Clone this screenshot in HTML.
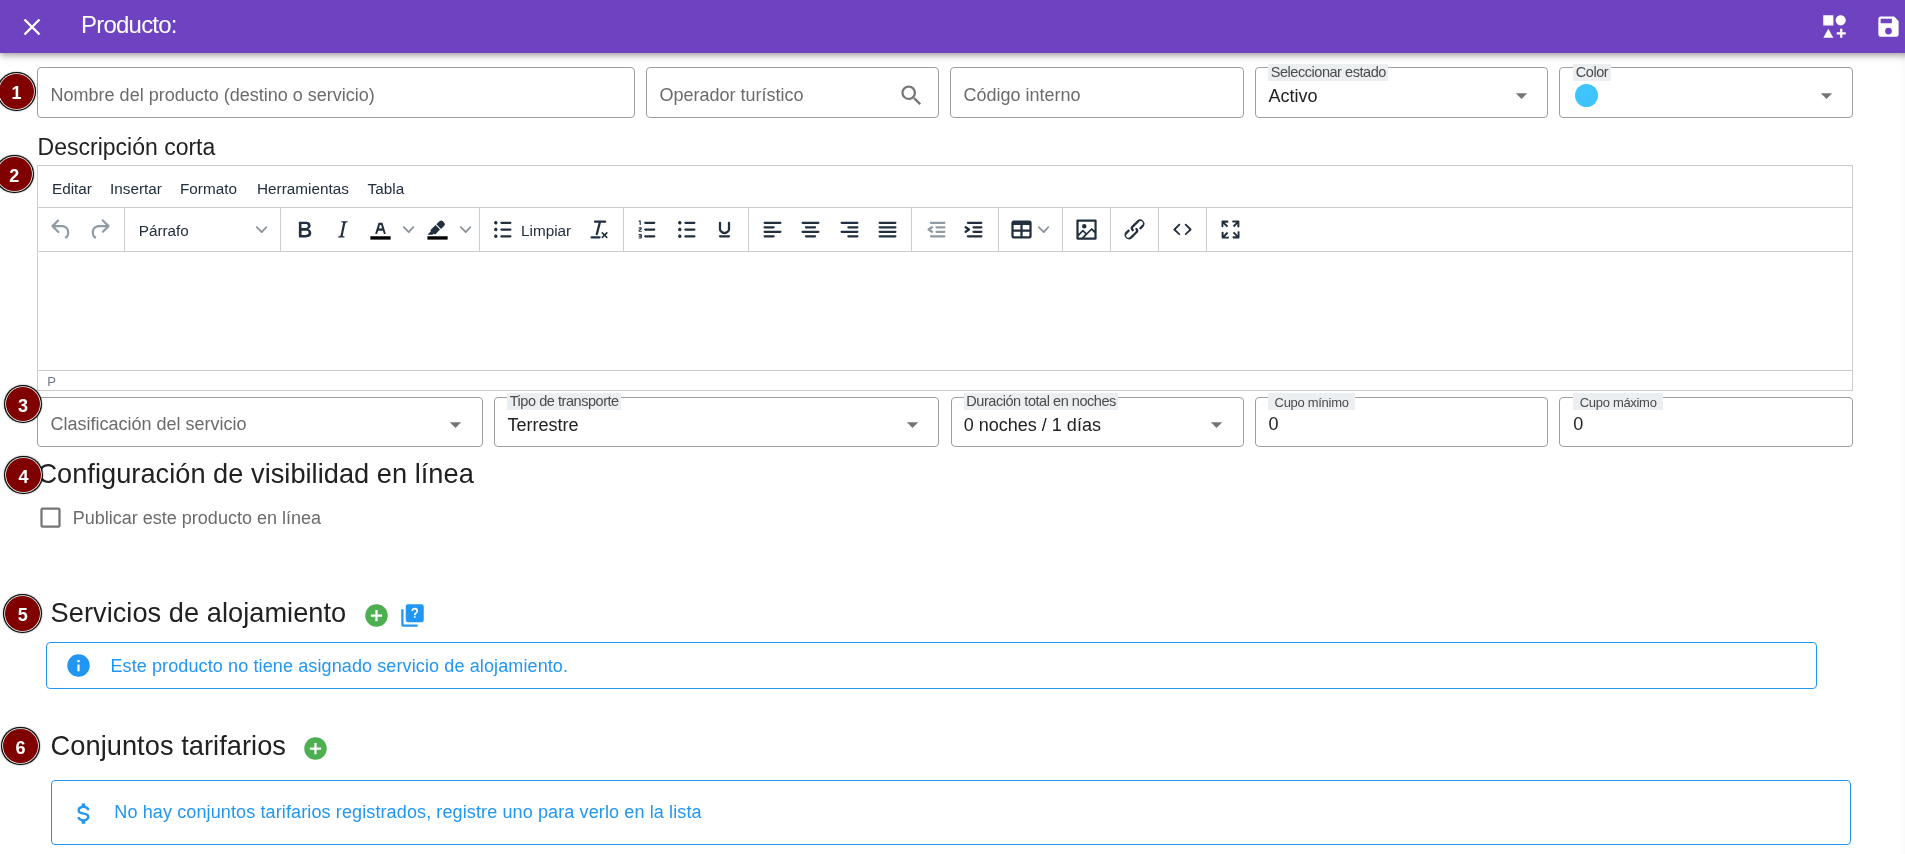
<!DOCTYPE html>
<html lang="es"><head><meta charset="utf-8"><title>Producto</title><style>
html,body{margin:0;padding:0;background:#fff;overflow:hidden;}
body{width:1905px;height:854px;overflow:hidden;position:relative;font-family:"Liberation Sans",sans-serif;}
.t{position:absolute;white-space:nowrap;line-height:1;}
.ic{position:absolute;display:block;overflow:visible;}
.box{position:absolute;box-sizing:border-box;border:1px solid #9e9e9e;background:transparent;}
.r{position:absolute;}
#wrap{position:absolute;left:0;top:0;width:1905px;height:854px;overflow:hidden;will-change:transform;}
#hdr{position:absolute;left:0;top:0;width:1935px;height:53px;background:#6f42c1;box-shadow:0 2.25px 4.5px -1.1px rgba(0,0,0,.2),0 4.5px 5.6px 0 rgba(0,0,0,.14),0 1.1px 11.25px 0 rgba(0,0,0,.12);}
.badge{position:absolute;box-sizing:border-box;width:34.8px;height:34.8px;border-radius:50%;background:#800000;box-shadow:0 0 0 .8px #fff,0 0 0 2px #0a0a0a,0 0 1.5px 2.3px rgba(0,0,0,.4);color:#fff;font-weight:bold;font-size:18px;line-height:38.6px;text-align:center;}
</style></head><body>
<div id="wrap">
<div id="hdr"></div>
<svg class="ic" style="left:19.5px;top:15px" width="24" height="24" viewBox="-12 -12 24 24"><path d="M-7.5-7.5L7.5 7.5M7.5-7.5L-7.5 7.5" stroke="#fff" stroke-width="2.45" fill="none"/></svg>
<div class="t" style="left:81.00px;top:12.98px;font-size:24px;color:#fff;letter-spacing:-0.78px;">Producto:</div>
<svg class="ic" style="left:1820.70px;top:13.10px" width="27" height="27" viewBox="0 0 24 24"><path fill="#fff" d="M2,2H11V11H2V2M17.5,2C20,2 22,4 22,6.5C22,9 20,11 17.5,11C15,11 13,9 13,6.5C13,4 15,2 17.5,2M6.5,14L11,22H2L6.5,14M19,17H22V19H19V22H17V19H14V17H17V14H19V17Z"/></svg>
<svg class="ic" style="left:1874.80px;top:13.30px" width="27" height="27" viewBox="0 0 24 24"><path fill="#fff" d="M15,9H5V5H15M12,19A3,3 0 0,1 9,16A3,3 0 0,1 12,13A3,3 0 0,1 15,16A3,3 0 0,1 12,19M17,3H5C3.89,3 3,3.9 3,5V19A2,2 0 0,0 5,21H19A2,2 0 0,0 21,19V7L17,3Z"/></svg>
<div class="box" style="left:37px;top:67px;width:598px;height:51px;border-color:#9e9e9e;border-radius:4px;"></div>
<div class="box" style="left:646px;top:67px;width:293px;height:51px;border-color:#9e9e9e;border-radius:4px;"></div>
<div class="box" style="left:950px;top:67px;width:294px;height:51px;border-color:#9e9e9e;border-radius:4px;"></div>
<div class="box" style="left:1255px;top:67px;width:293px;height:51px;border-color:#9e9e9e;border-radius:4px;"></div>
<div class="box" style="left:1559px;top:67px;width:294px;height:51px;border-color:#9e9e9e;border-radius:4px;"></div>
<div class="t" style="left:50.60px;top:86.46px;font-size:18px;color:#6b6b6b;">Nombre del producto (destino o servicio)</div>
<div class="t" style="left:659.50px;top:86.46px;font-size:18px;color:#6b6b6b;">Operador turístico</div>
<svg class="ic" style="left:898.40px;top:81.80px" width="27" height="27" viewBox="0 0 24 24"><path fill="#757575" d="M9.5,3A6.5,6.5 0 0,1 16,9.5C16,11.11 15.41,12.59 14.44,13.73L14.71,14H15.5L20.5,19L19,20.5L14,15.5V14.71L13.73,14.44C12.59,15.41 11.11,16 9.5,16A6.5,6.5 0 0,1 3,9.5A6.5,6.5 0 0,1 9.5,3M9.5,5C7,5 5,7 5,9.5C5,12 7,14 9.5,14C12,14 14,12 14,9.5C14,7 12,5 9.500,5Z"/></svg>
<div class="t" style="left:963.50px;top:86.46px;font-size:18px;color:#6b6b6b;">Código interno</div>
<div class="r" style="left:1268px;top:64px;width:120px;height:17px;background:#eceff1;"></div>
<div class="t" style="left:1270.70px;top:65.23px;font-size:14.5px;color:#4a4a4a;letter-spacing:-0.45px;">Seleccionar estado</div>
<div class="t" style="left:1268.60px;top:86.56px;font-size:18px;color:#212121;">Activo</div>
<svg class="ic" style="left:1508.30px;top:82.00px" width="27" height="27" viewBox="0 0 24 24"><path fill="#757575" d="M7,10L12,15L17,10H7Z"/></svg>
<div class="r" style="left:1573px;top:64px;width:38px;height:17px;background:#eceff1;"></div>
<div class="t" style="left:1575.80px;top:65.23px;font-size:14.5px;color:#4a4a4a;letter-spacing:-0.45px;">Color</div>
<div class="r" style="left:1575.0px;top:84.0px;width:23.2px;height:23.2px;border-radius:50%;background:#40c4ff"></div>
<svg class="ic" style="left:1812.60px;top:82.00px" width="27" height="27" viewBox="0 0 24 24"><path fill="#757575" d="M7,10L12,15L17,10H7Z"/></svg>
<div class="t" style="left:37.60px;top:135.53px;font-size:23px;color:#212121;">Descripción corta</div>
<div class="r" style="left:37px;top:165px;width:1816px;height:226px;border:1px solid #ccc;box-sizing:border-box"></div>
<div class="r" style="left:38px;top:207px;width:1814px;height:1px;background:#ccc;"></div>
<div class="r" style="left:38px;top:251px;width:1814px;height:1px;background:#ccc;"></div>
<div class="r" style="left:38px;top:370px;width:1814px;height:1px;background:#ccc;"></div>
<div class="t" style="left:52.00px;top:180.95px;font-size:15.3px;color:#222f3e;">Editar</div>
<div class="t" style="left:110.00px;top:180.95px;font-size:15.3px;color:#222f3e;">Insertar</div>
<div class="t" style="left:180.00px;top:180.95px;font-size:15.3px;color:#222f3e;">Formato</div>
<div class="t" style="left:257.00px;top:180.95px;font-size:15.3px;color:#222f3e;">Herramientas</div>
<div class="t" style="left:367.60px;top:180.95px;font-size:15.3px;color:#222f3e;">Tabla</div>
<div class="r" style="left:124px;top:208px;width:1px;height:43px;background:#ccc;"></div>
<div class="r" style="left:280px;top:208px;width:1px;height:43px;background:#ccc;"></div>
<div class="r" style="left:479px;top:208px;width:1px;height:43px;background:#ccc;"></div>
<div class="r" style="left:623px;top:208px;width:1px;height:43px;background:#ccc;"></div>
<div class="r" style="left:748px;top:208px;width:1px;height:43px;background:#ccc;"></div>
<div class="r" style="left:911px;top:208px;width:1px;height:43px;background:#ccc;"></div>
<div class="r" style="left:998px;top:208px;width:1px;height:43px;background:#ccc;"></div>
<div class="r" style="left:1062px;top:208px;width:1px;height:43px;background:#ccc;"></div>
<div class="r" style="left:1110px;top:208px;width:1px;height:43px;background:#ccc;"></div>
<div class="r" style="left:1158px;top:208px;width:1px;height:43px;background:#ccc;"></div>
<div class="r" style="left:1206px;top:208px;width:1px;height:43px;background:#ccc;"></div>
<svg class="ic" style="left:48.00px;top:215.80px" width="27" height="27" viewBox="0 0 24 24" fill="#909aa5"><path d="M6.4 8H12c3.7 0 6.2 2 6.8 5.1.6 2.7-.4 5.6-2.3 6.8a1 1 0 01-1-1.8c1.1-.6 1.8-2.7 1.4-4.6-.5-2.1-2.1-3.5-4.9-3.5H6.4l3.3 3.3a1 1 0 11-1.4 1.4l-5-5a1 1 0 010-1.4l5-5a1 1 0 011.4 1.4L6.4 8z" fill-rule="nonzero"/></svg>
<svg class="ic" style="left:86.00px;top:215.80px" width="27" height="27" viewBox="0 0 24 24" fill="#909aa5"><path d="M17.6 10H12c-2.8 0-4.4 1.4-4.9 3.5-.4 2 .3 4 1.4 4.6a1 1 0 11-1 1.8c-2-1.2-2.9-4.1-2.3-6.8.6-3 3-5.1 6.8-5.1h5.6l-3.3-3.3a1 1 0 111.4-1.4l5 5a1 1 0 010 1.4l-5 5a1 1 0 01-1.4-1.4l3.3-3.3z" fill-rule="nonzero"/></svg>
<div class="t" style="left:138.70px;top:223.05px;font-size:15.3px;color:#222f3e;">Párrafo</div>
<svg class="ic" style="left:255.88px;top:223.97px" width="11.25" height="11.25" viewBox="0 0 10 10" fill="#8c939b"><path d="M8.700 2.200c.3-.3.8-.3 1 0 .4.400.4.900 0 1.200L5.700 7.800c-.3.300-.9.300-1.200 0L.2 3.400a.8.800 0 010-1.200c.3-.3.8-.3 1.100 0l3.800 3.900 3.600-3.900z" fill-rule="nonzero"/></svg>
<svg class="ic" style="left:290.70px;top:215.80px" width="27" height="27" viewBox="0 0 24 24" fill="#222f3e"><path d="M7.8 19c-.3 0-.5 0-.6-.2l-.2-.5V5.7c0-.2 0-.4.2-.5l.6-.2h5c1.5 0 2.7.3 3.5 1 .7.6 1.1 1.4 1.1 2.5a3 3 0 01-.6 1.9c-.4.6-1 1-1.6 1.200.4.100.9.300 1.300.600s.8.700 1 1.200c.4.400.5 1 .5 1.600 0 1.300-.4 2.300-1.300 3-.8.700-2.100 1-3.800 1H7.800zm5-8.300c.6 0 1.200-.100 1.600-.500.4-.300.6-.700.6-1.300 0-1.100-.8-1.700-2.300-1.700H9.300v3.500h3.400zm.5 6c.7 0 1.300-.100 1.700-.400.4-.400.6-.900.6-1.500s-.2-1-.7-1.400c-.4-.300-1-.400-2-.400H9.400v3.800h4z" fill-rule="evenodd"/></svg>
<svg class="ic" style="left:329.20px;top:215.80px" width="27" height="27" viewBox="0 0 24 24" fill="#222f3e"><path d="M16.7 4.7l-.1.9h-.3c-.6 0-1 0-1.400.300-.3.300-.4.600-.5 1.100l-2.100 9.800v.600c0 .500.400.800 1.400.800h.200l-.2.800H8l.2-.8h.2c1.100 0 1.800-.500 2-1.500l2-9.800.1-.5c0-.6-.4-.8-1.400-.8h-.3l.2-.9h5.800z" fill-rule="evenodd"/></svg>
<svg class="ic" style="left:366.90px;top:215.80px" width="27" height="27" viewBox="0 0 24 24" fill="#222f3e"><g fill-rule="evenodd"><path fill="#000" d="M3 18h18v3H3z"/><path d="M8.700 16h-.8a.5.5 0 01-.5-.6l2.700-9c.1-.3.3-.4.5-.4h2.800c.2 0 .4.100.5.400l2.700 9a.5.5 0 01-.5.600h-.8a.5.5 0 01-.4-.4l-.7-2.200c0-.3-.3-.4-.5-.4h-3.400c-.2 0-.4.100-.5.400l-.7 2.200c0 .300-.2.400-.4.400zm2.600-7.600l-.6 2a.5.5 0 00.5.600h1.600a.5.5 0 00.5-.600l-.6-2c0-.3-.3-.4-.5-.4h-.4c-.2 0-.4.100-.5.400z"/></g></svg>
<svg class="ic" style="left:402.77px;top:223.78px" width="11.25" height="11.25" viewBox="0 0 10 10" fill="#8c939b"><path d="M8.700 2.200c.3-.3.8-.3 1 0 .4.400.4.900 0 1.200L5.700 7.800c-.3.300-.9.300-1.200 0L.2 3.400a.8.800 0 010-1.200c.3-.3.8-.3 1.100 0l3.800 3.900 3.600-3.900z" fill-rule="nonzero"/></svg>
<svg class="ic" style="left:423.90px;top:215.80px" width="27" height="27" viewBox="0 0 24 24" fill="#222f3e"><g fill-rule="evenodd"><path fill="#000" d="M3 18h18v3H3z"/><path fill-rule="nonzero" d="M7.700 16.700H3l3.300-3.300-.7-.8L10.200 8l4 4.100-4 4.200c-.2.200-.6.200-.8 0l-.6-.7-1.100 1.100zm5-7.500L11 7.400l3-2.900a2 2 0 012.600 0L18 6c.7.700.7 2 0 2.700l-2.900 2.900-1.800-1.800-.5-.6"/></g></svg>
<svg class="ic" style="left:459.77px;top:223.78px" width="11.25" height="11.25" viewBox="0 0 10 10" fill="#8c939b"><path d="M8.700 2.200c.3-.3.8-.3 1 0 .4.400.4.900 0 1.200L5.700 7.800c-.3.300-.9.300-1.200 0L.2 3.400a.8.800 0 010-1.200c.3-.3.8-.3 1.100 0l3.800 3.900 3.600-3.900z" fill-rule="nonzero"/></svg>
<svg class="ic" style="left:488.50px;top:215.80px" width="27" height="27" viewBox="0 0 24 24" fill="#222f3e"><path d="M11 5h8c.6 0 1 .4 1 1s-.4 1-1 1h-8a1 1 0 010-2zm0 6h8c.6 0 1 .4 1 1s-.4 1-1 1h-8a1 1 0 010-2zm0 6h8c.6 0 1 .4 1 1s-.4 1-1 1h-8a1 1 0 010-2zM4.500 6c0-.4.1-.8.4-1 .3-.4.7-.5 1.100-.5.4 0 .8.100 1 .400.4.300.5.700.5 1.100 0 .400-.1.800-.4 1-.3.400-.7.500-1.100.500-.4 0-.8-.100-1-.400-.4-.300-.5-.700-.5-1.100zm0 6c0-.4.1-.8.4-1 .3-.4.7-.5 1.100-.5.4 0 .8.100 1 .400.4.300.5.700.5 1.100 0 .400-.1.800-.4 1-.3.400-.7.500-1.100.500-.4 0-.8-.100-1-.400-.4-.300-.5-.700-.5-1.100zm0 6c0-.4.1-.8.4-1 .3-.4.7-.5 1.100-.5.4 0 .8.100 1 .400.4.300.5.700.5 1.100 0 .400-.1.800-.4 1-.3.400-.7.500-1.100.500-.4 0-.8-.100-1-.400-.4-.300-.5-.700-.5-1.100z" fill-rule="evenodd"/></svg>
<div class="t" style="left:521.00px;top:223.05px;font-size:15.3px;color:#222f3e;">Limpiar</div>
<svg class="ic" style="left:586.10px;top:215.80px" width="27" height="27" viewBox="0 0 24 24" fill="#222f3e"><path d="M13.200 6a1 1 0 010 .2l-2.600 10a1 1 0 01-1 .8h-.2a.8.8 0 01-.8-1l2.600-10H8a1 1 0 110-2h9a1 1 0 010 2h-3.800zM5 18h7a1 1 0 010 2H5a1 1 0 010-2zm13 1.500L16.500 18 15 19.500a.7.7 0 01-1-1l1.500-1.500-1.500-1.500a.7.7 0 011-1l1.500 1.500 1.500-1.500a.7.7 0 011 1L17.500 17l1.500 1.500a.7.7 0 01-1 1z" fill-rule="evenodd"/></svg>
<svg class="ic" style="left:634.10px;top:215.80px" width="27" height="27" viewBox="0 0 24 24" fill="#222f3e"><path d="M10 17h8c.6 0 1 .4 1 1s-.4 1-1 1h-8a1 1 0 010-2zm0-6h8c.6 0 1 .4 1 1s-.4 1-1 1h-8a1 1 0 010-2zm0-6h8c.6 0 1 .4 1 1s-.4 1-1 1h-8a1 1 0 110-2zM6 4v3.500c0 .300-.2.500-.5.500a.5.5 0 01-.5-.5V5h-.5a.5.5 0 010-1H6zm-1 8.800l.2.200h1.300c.3 0 .5.200.5.500s-.2.500-.5.500H4.900a1 1 0 01-.9-1V13c0-.4.300-.8.600-1l1.200-.4.200-.3a.2.2 0 00-.2-.2H4.500a.5.5 0 01-.5-.5c0-.3.200-.5.500-.5h1.600c.5 0 .9.400.9 1v.100c0 .4-.3.800-.6 1l-1.200.400-.2.300zM7 17v2c0 .6-.4 1-1 1H4.500a.5.5 0 010-1h1.200c.2 0 .3-.1.300-.3 0-.2-.1-.3-.3-.3H4.400a.4.4 0 110-.8h1.300c.2 0 .3-.1.300-.3 0-.2-.1-.3-.3-.3H4.500a.5.5 0 110-1H6c.6 0 1 .4 1 1z" fill-rule="evenodd"/></svg>
<svg class="ic" style="left:672.50px;top:215.80px" width="27" height="27" viewBox="0 0 24 24" fill="#222f3e"><path d="M11 5h8c.6 0 1 .4 1 1s-.4 1-1 1h-8a1 1 0 010-2zm0 6h8c.6 0 1 .4 1 1s-.4 1-1 1h-8a1 1 0 010-2zm0 6h8c.6 0 1 .4 1 1s-.4 1-1 1h-8a1 1 0 010-2zM4.500 6c0-.4.1-.8.4-1 .3-.4.7-.5 1.100-.5.4 0 .8.100 1 .400.4.300.5.700.5 1.100 0 .400-.1.800-.4 1-.3.400-.7.500-1.100.500-.4 0-.8-.100-1-.400-.4-.300-.5-.700-.5-1.100zm0 6c0-.4.1-.8.4-1 .3-.4.7-.5 1.100-.5.4 0 .8.100 1 .400.4.300.5.700.5 1.100 0 .400-.1.800-.4 1-.3.400-.7.500-1.100.500-.4 0-.8-.100-1-.400-.4-.300-.5-.700-.5-1.100zm0 6c0-.4.1-.8.4-1 .3-.4.7-.5 1.100-.5.4 0 .8.100 1 .400.4.300.5.700.5 1.100 0 .400-.1.800-.4 1-.3.400-.7.500-1.100.500-.4 0-.8-.100-1-.400-.4-.300-.5-.700-.5-1.100z" fill-rule="evenodd"/></svg>
<svg class="ic" style="left:711.10px;top:215.80px" width="27" height="27" viewBox="0 0 24 24" fill="#222f3e"><path d="M16 5c.6 0 1 .4 1 1v5.500a4 4 0 01-.4 1.800l-1 1.400a5.300 5.300 0 01-5.500 1 5 5 0 01-1.600-1c-.5-.4-.8-.9-1.100-1.400a4 4 0 01-.4-1.800V6c0-.6.400-1 1-1s1 .4 1 1v5.500c0 .3 0 .6.200 1l.6.700a3.300 3.300 0 002.200.8 3.400 3.400 0 002.200-.8c.3-.2.400-.5.6-.8l.2-.9V6c0-.6.400-1 1-1zM8 17h8c.6 0 1 .4 1 1s-.4 1-1 1H8a1 1 0 010-2z" fill-rule="evenodd"/></svg>
<svg class="ic" style="left:759.30px;top:215.80px" width="27" height="27" viewBox="0 0 24 24" fill="#222f3e"><path d="M5 5h14c.6 0 1 .4 1 1s-.4 1-1 1H5a1 1 0 110-2zm0 4h8c.6 0 1 .4 1 1s-.4 1-1 1H5a1 1 0 110-2zm0 8h8c.6 0 1 .4 1 1s-.4 1-1 1H5a1 1 0 010-2zm0-4h14c.6 0 1 .4 1 1s-.4 1-1 1H5a1 1 0 010-2z" fill-rule="evenodd"/></svg>
<svg class="ic" style="left:797.40px;top:215.80px" width="27" height="27" viewBox="0 0 24 24" fill="#222f3e"><path d="M5 5h14c.6 0 1 .4 1 1s-.4 1-1 1H5a1 1 0 110-2zm3 4h8c.6 0 1 .4 1 1s-.4 1-1 1H8a1 1 0 110-2zm0 8h8c.6 0 1 .4 1 1s-.4 1-1 1H8a1 1 0 010-2zm-3-4h14c.6 0 1 .4 1 1s-.4 1-1 1H5a1 1 0 010-2z" fill-rule="evenodd"/></svg>
<svg class="ic" style="left:835.90px;top:215.80px" width="27" height="27" viewBox="0 0 24 24" fill="#222f3e"><path d="M5 5h14c.6 0 1 .4 1 1s-.4 1-1 1H5a1 1 0 110-2zm6 4h8c.6 0 1 .4 1 1s-.4 1-1 1h-8a1 1 0 010-2zm0 8h8c.6 0 1 .4 1 1s-.4 1-1 1h-8a1 1 0 010-2zm-6-4h14c.6 0 1 .4 1 1s-.4 1-1 1H5a1 1 0 010-2z" fill-rule="evenodd"/></svg>
<svg class="ic" style="left:874.40px;top:215.80px" width="27" height="27" viewBox="0 0 24 24" fill="#222f3e"><path d="M5 5h14c.6 0 1 .4 1 1s-.4 1-1 1H5a1 1 0 110-2zm0 4h14c.6 0 1 .4 1 1s-.4 1-1 1H5a1 1 0 110-2zm0 4h14c.6 0 1 .4 1 1s-.4 1-1 1H5a1 1 0 010-2zm0 4h14c.6 0 1 .4 1 1s-.4 1-1 1H5a1 1 0 010-2z" fill-rule="evenodd"/></svg>
<svg class="ic" style="left:922.50px;top:215.80px" width="27" height="27" viewBox="0 0 24 24" fill="#909aa5"><path d="M7 5h12c.6 0 1 .4 1 1s-.4 1-1 1H7a1 1 0 110-2zm5 4h7c.6 0 1 .4 1 1s-.4 1-1 1h-7a1 1 0 010-2zm0 4h7c.6 0 1 .4 1 1s-.4 1-1 1h-7a1 1 0 010-2zm-5 4h12a1 1 0 010 2H7a1 1 0 010-2zm1.600-3.800a1 1 0 01-1.200 1.600l-3-2a1 1 0 010-1.600l3-2a1 1 0 011.200 1.600L6.800 12l1.800 1.200z" fill-rule="evenodd"/></svg>
<svg class="ic" style="left:960.20px;top:215.80px" width="27" height="27" viewBox="0 0 24 24" fill="#222f3e"><path d="M7 5h12c.6 0 1 .4 1 1s-.4 1-1 1H7a1 1 0 110-2zm5 4h7c.6 0 1 .4 1 1s-.4 1-1 1h-7a1 1 0 010-2zm0 4h7c.6 0 1 .4 1 1s-.4 1-1 1h-7a1 1 0 010-2zm-5 4h12a1 1 0 010 2H7a1 1 0 010-2zm-2.600-3.800L6.200 12l-1.800-1.200a1 1 0 011.200-1.600l3 2a1 1 0 010 1.600l-3 2a1 1 0 11-1.200-1.600z" fill-rule="evenodd"/></svg>
<svg class="ic" style="left:1008.00px;top:215.80px" width="27" height="27" viewBox="0 0 24 24" fill="#222f3e"><path fill-rule="nonzero" d="M19 4a2 2 0 012 2v12a2 2 0 01-2 2H5a2 2 0 01-2-2V6c0-1.100.9-2 2-2h14zM5 14v4h6v-4H5zm14 0h-6v4h6v-4zm0-6h-6v4h6V8zM5 12h6V8H5v4z"/></svg>
<svg class="ic" style="left:1037.88px;top:223.78px" width="11.25" height="11.25" viewBox="0 0 10 10" fill="#8c939b"><path d="M8.700 2.200c.3-.3.8-.3 1 0 .4.400.4.900 0 1.200L5.700 7.800c-.3.300-.9.300-1.200 0L.2 3.400a.8.800 0 010-1.200c.3-.3.8-.3 1.100 0l3.800 3.900 3.600-3.900z" fill-rule="nonzero"/></svg>
<svg class="ic" style="left:1072.90px;top:215.80px" width="27" height="27" viewBox="0 0 24 24" fill="#222f3e"><path d="M5 15.700l3.300-3.200c.3-.3.7-.3 1 0L12 15l4.100-4c.3-.4.8-.4 1 0l2 1.900V5H5v10.700zM5 18V19h3l2.800-2.900-2-2L5 17.900zm14-3l-2.500-2.400-6.400 6.500H19v-4zM4 3h16c.6 0 1 .4 1 1v16c0 .6-.4 1-1 1H4a1 1 0 01-1-1V4c0-.6.400-1 1-1zm6 8a2 2 0 100-4 2 2 0 000 4z" fill-rule="nonzero"/></svg>
<svg class="ic" style="left:1121.00px;top:215.80px" width="27" height="27" viewBox="0 0 24 24" fill="#222f3e"><path d="M6.200 12.300a1 1 0 011.400 1.400l-2.100 2a2 2 0 102.700 2.800l4.800-4.800a1 1 0 000-1.400 1 1 0 111.400-1.500 3 3 0 010 4.300l-4.800 4.800a4 4 0 01-5.600-5.600l2.200-2zm11.600-.6a1 1 0 01-1.400-1.400l2-2a2 2 0 10-2.600-2.800L11 10.300a1 1 0 000 1.400A1 1 0 119.600 13a3 3 0 010-4.300l4.800-4.800a4 4 0 015.600 5.600l-2.200 2.200z" fill-rule="nonzero"/></svg>
<svg class="ic" style="left:1168.70px;top:215.80px" width="27" height="27" viewBox="0 0 24 24" fill="#222f3e"><g fill-rule="nonzero"><path d="M9.800 15.700c.3.300.3.800 0 1-.3.400-.9.400-1.200 0l-4.400-4.100a.8.800 0 010-1.200l4.400-4.200c.3-.3.900-.3 1.200 0 .3.300.3.800 0 1.100L6 12l3.800 3.700zM14.200 15.700c-.3.300-.3.800 0 1 .4.400.9.400 1.200 0l4.400-4.100c.3-.3.300-.9 0-1.200l-4.400-4.200a.8.800 0 00-1.200 0c-.3.300-.3.800 0 1.100L18 12l-3.800 3.700z"/></g></svg>
<svg class="ic" style="left:1217.00px;top:215.80px" width="27" height="27" viewBox="0 0 24 24" fill="#222f3e"><path d="M15.300 10l-1.200-1.300 2.900-3h-2.300a.9.9 0 110-1.700H19c.5 0 .9.400.9.900v4.400a.9.9 0 11-1.800 0V7l-2.900 3zm0 4l3 3v-2.300a.9.9 0 111.700 0V19c0 .5-.4.9-.9.900h-4.400a.9.9 0 110-1.800H17l-3-2.900 1.300-1.200zM10 15.400l-2.900 3h2.300a.9.9 0 110 1.700H5a.9.9 0 01-.9-.9v-4.400a.9.9 0 111.800 0V17l2.900-3 1.200 1.300zM8.700 10L5.700 7v2.300a.9.9 0 01-1.700 0V5c0-.5.400-.9.900-.9h4.400a.9.9 0 010 1.800H7l3 2.900-1.300 1.200z" fill-rule="nonzero"/></svg>
<div class="t" style="left:47.30px;top:374.90px;font-size:13px;color:#6b7785;">P</div>
<div class="box" style="left:37px;top:397px;width:446px;height:50px;border-color:#9e9e9e;border-radius:4px;"></div>
<div class="box" style="left:494px;top:397px;width:445px;height:50px;border-color:#9e9e9e;border-radius:4px;"></div>
<div class="box" style="left:951px;top:397px;width:293px;height:50px;border-color:#9e9e9e;border-radius:4px;"></div>
<div class="box" style="left:1255px;top:397px;width:293px;height:50px;border-color:#9e9e9e;border-radius:4px;"></div>
<div class="box" style="left:1559px;top:397px;width:294px;height:50px;border-color:#9e9e9e;border-radius:4px;"></div>
<div class="t" style="left:50.50px;top:415.36px;font-size:18px;color:#6b6b6b;">Clasificación del servicio</div>
<svg class="ic" style="left:441.90px;top:411.20px" width="27" height="27" viewBox="0 0 24 24"><path fill="#757575" d="M7,10L12,15L17,10H7Z"/></svg>
<div class="r" style="left:507px;top:393px;width:114px;height:17px;background:#eceff1;"></div>
<div class="t" style="left:509.70px;top:393.83px;font-size:14.5px;color:#4a4a4a;letter-spacing:-0.45px;">Tipo de transporte</div>
<div class="t" style="left:507.50px;top:415.56px;font-size:18px;color:#212121;">Terrestre</div>
<svg class="ic" style="left:898.90px;top:411.20px" width="27" height="27" viewBox="0 0 24 24"><path fill="#757575" d="M7,10L12,15L17,10H7Z"/></svg>
<div class="r" style="left:964px;top:393px;width:154px;height:17px;background:#eceff1;"></div>
<div class="t" style="left:966.30px;top:393.83px;font-size:14.5px;color:#4a4a4a;letter-spacing:-0.45px;">Duración total en noches</div>
<div class="t" style="left:963.80px;top:415.56px;font-size:18px;color:#212121;">0 noches / 1 días</div>
<svg class="ic" style="left:1203.20px;top:411.20px" width="27" height="27" viewBox="0 0 24 24"><path fill="#757575" d="M7,10L12,15L17,10H7Z"/></svg>
<div class="r" style="left:1268px;top:393px;width:87px;height:17px;background:#eceff1;"></div>
<div class="t" style="left:1274.60px;top:395.70px;font-size:13px;color:#4a4a4a;letter-spacing:-0.3px;">Cupo mínimo</div>
<div class="t" style="left:1268.60px;top:414.76px;font-size:18px;color:#212121;">0</div>
<div class="r" style="left:1573px;top:393px;width:90px;height:17px;background:#eceff1;"></div>
<div class="t" style="left:1579.70px;top:395.70px;font-size:13px;color:#4a4a4a;letter-spacing:-0.3px;">Cupo máximo</div>
<div class="t" style="left:1573.20px;top:414.76px;font-size:18px;color:#212121;">0</div>
<div class="t" style="left:37.40px;top:459.78px;font-size:27.2px;color:#212121;letter-spacing:0.03px;">Configuración de visibilidad en línea</div>
<svg class="ic" style="left:37.00px;top:504.40px" width="27" height="27" viewBox="0 0 24 24"><path fill="#757575" d="M19,3H5C3.89,3 3,3.89 3,5V19A2,2 0 0,0 5,21H19A2,2 0 0,0 21,19V5C21,3.89 20.1,3 19,3M19,5V19H5V5H19Z"/></svg>
<div class="t" style="left:72.80px;top:509.16px;font-size:18px;color:#6b6b6b;">Publicar este producto en línea</div>
<div class="t" style="left:50.60px;top:598.98px;font-size:27.2px;color:#212121;letter-spacing:0.04px;">Servicios de alojamiento</div>
<svg class="ic" style="left:363.00px;top:601.75px" width="27" height="27" viewBox="0 0 24 24"><path fill="#4caf50" d="M17,13H13V17H11V13H7V11H11V7H13V11H17M12,2A10,10 0 0,0 2,12A10,10 0 0,0 12,22A10,10 0 0,0 22,12A10,10 0 0,0 12,2Z"/></svg>
<svg class="ic" style="left:399px;top:601.65px" width="27" height="27" viewBox="0 0 24 24"><path fill="#2196f3" d="M8 2h12a2 2 0 012 2v12a2 2 0 01-2 2H8a2 2 0 01-2-2V4a2 2 0 012-2zM4 6.500H2V20a2 2 0 002 2h12.500v-2H4V6.500z"/><g transform="translate(14 9.600) scale(.75) translate(-12 -12)"><path fill="#fff" d="M11,18H13V16H11V18M12,6A4,4 0 0,0 8,10H10A2,2 0 0,1 12,8A2,2 0 0,1 14,10C14,12 11,11.75 11,15H13C13,12.75 16,12.5 16,10A4,4 0 0,0 12,6Z"/></g></svg>
<div class="box" style="left:46px;top:642px;width:1771px;height:47px;border-color:#2196f3;border-radius:4px;"></div>
<svg class="ic" style="left:65.00px;top:652.30px" width="27" height="27" viewBox="0 0 24 24"><path fill="#2196f3" d="M13,9H11V7H13M13,17H11V11H13M12,2A10,10 0 0,0 2,12A10,10 0 0,0 12,22A10,10 0 0,0 22,12A10,10 0 0,0 12,2Z"/></svg>
<div class="t" style="left:110.40px;top:656.56px;font-size:18px;color:#2196f3;letter-spacing:0.115px;">Este producto no tiene asignado servicio de alojamiento.</div>
<div class="t" style="left:50.60px;top:732.28px;font-size:27.2px;color:#212121;letter-spacing:0.06px;">Conjuntos tarifarios</div>
<svg class="ic" style="left:302.00px;top:734.50px" width="27" height="27" viewBox="0 0 24 24"><path fill="#4caf50" d="M17,13H13V17H11V13H7V11H11V7H13V11H17M12,2A10,10 0 0,0 2,12A10,10 0 0,0 12,22A10,10 0 0,0 22,12A10,10 0 0,0 12,2Z"/></svg>
<div class="box" style="left:51px;top:780px;width:1800px;height:65px;border-color:#2196f3;border-radius:4px;"></div>
<svg class="ic" style="left:68.5px;top:799.5px" width="28.9" height="27" viewBox="0 0 24 24" preserveAspectRatio="none"><path fill="#2196f3" d="M7,15H9C9,16.08 10.37,17 12,17C13.63,17 15,16.08 15,15C15,13.9 13.96,13.5 11.760,12.970C9.640,12.440 7,11.780 7,9C7,7.210 8.470,5.690 10.500,5.180V3H13.500V5.180C15.530,5.690 17,7.210 17,9H15C15,7.920 13.630,7 12,7C10.370,7 9,7.920 9,9C9,10.100 10.040,10.500 12.240,11.030C14.360,11.560 17,12.220 17,15C17,16.790 15.530,18.310 13.500,18.820V21H10.500V18.820C8.470,18.310 7,16.790 7,15Z"/></svg>
<div class="t" style="left:114.30px;top:803.06px;font-size:18px;color:#2196f3;letter-spacing:0.12px;">No hay conjuntos tarifarios registrados, registre uno para verlo en la lista</div>
<div class="badge" style="left:-0.90px;top:73.90px">1</div>
<div class="badge" style="left:-3.10px;top:156.60px">2</div>
<div class="badge" style="left:5.50px;top:386.50px">3</div>
<div class="badge" style="left:6.20px;top:457.60px">4</div>
<div class="badge" style="left:5.30px;top:596.40px">5</div>
<div class="badge" style="left:3.20px;top:728.70px">6</div>
<div class="r" style="left:1901px;top:53px;width:4px;height:801px;background:rgba(0,0,0,.015);"></div>
</div>
</body></html>
